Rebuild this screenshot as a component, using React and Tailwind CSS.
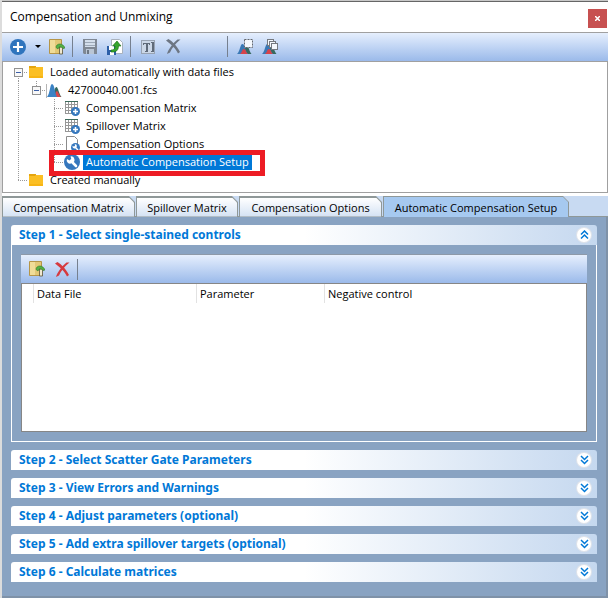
import { useState } from 'react';
import clsx from 'clsx';

const TREE = [
  { id: 'auto', label: 'Loaded automatically with data files', icon: 'folder', guides: ['boxFirst'] },
  { id: 'fcs', label: '42700040.001.fcs', icon: 'peaks', guides: ['line', 'boxLast'] },
  { id: 'matrix', label: 'Compensation Matrix', icon: 'grid', guides: ['line', 'blank', 'tee'] },
  { id: 'spill', label: 'Spillover Matrix', icon: 'grid', guides: ['line', 'blank', 'tee'] },
  { id: 'options', label: 'Compensation Options', icon: 'page', guides: ['line', 'blank', 'tee'] },
  { id: 'setup', label: 'Automatic Compensation Setup', icon: 'wrench', guides: ['line', 'blank', 'end'] },
  { id: 'manual', label: 'Created manually', icon: 'folder', guides: ['end'] },
];

const TABS = [
  { label: 'Compensation Matrix', width: 'w-[133px]' },
  { label: 'Spillover Matrix', width: 'w-[102px]' },
  { label: 'Compensation Options', width: 'w-[143px]' },
  { label: 'Automatic Compensation Setup', width: 'w-[186px]' },
];

const STEPS = [
  'Step 1 - Select single-stained controls',
  'Step 2 - Select Scatter Gate Parameters',
  'Step 3 - View Errors and Warnings',
  'Step 4 - Adjust parameters (optional)',
  'Step 5 - Add extra spillover targets (optional)',
  'Step 6 - Calculate matrices',
];

function Guide({ kind }) {
  const box = kind === 'boxFirst' || kind === 'boxLast';
  return (
    <svg width="18" height="18" viewBox="0 0 18 18" className="shrink-0" shapeRendering="crispEdges">
      <g stroke="#9a9a9a" strokeDasharray="1 1" fill="none">
        {(kind === 'line' || kind === 'tee') && <path d="M9.5 0V18" />}
        {(kind === 'end' || kind === 'boxLast') && <path d="M9.5 0V9" />}
        {kind === 'boxFirst' && <path d="M9.5 9V18" />}
        {kind !== 'line' && kind !== 'blank' && <path d="M9 9.5H18" />}
      </g>
      {box && (
        <>
          <rect x="5.5" y="5.5" width="8" height="8" fill="#f8f8f8" stroke="#919191" />
          <path d="M7 9.5H12" stroke="#3b5fa8" />
        </>
      )}
    </svg>
  );
}

function FolderIcon() {
  return (
    <svg width="16" height="16" viewBox="0 0 16 16">
      <path d="M1 2h7v3H1z" fill="#e5a50f" />
      <path d="M1 4h6l1-1h7v11H1z" fill="#fbbf24" />
      <path d="M1 12h14v2H1z" fill="#f7b515" />
    </svg>
  );
}

function PeaksIcon() {
  return (
    <svg width="16" height="16" viewBox="0 0 16 16">
      <path d="M.5 2v14" stroke="#b4b4b4" />
      <path d="M7 15c1-6 2-10 3.500-10S13 12 15.500 15z" fill="#37695f" />
      <path d="M9 15c0-4 1-6 2-6s2 4 4 6z" fill="#d8484c" />
      <path d="M1 15c3-3 3-13 5-13 2.500 0 3 10 5 13z" fill="#3b82c4" />
    </svg>
  );
}

function GridIcon() {
  return (
    <svg width="16" height="16" viewBox="0 0 16 16">
      <path d="M1 1h13v13H1z" fill="#fff" />
      <path d="M1.500 1v13M4.500 1v13M7.500 1v13M10.500 1v13M13.500 1v13M1 4.500h13M1 7.500h13M1 10.500h13M1 13.500h13" stroke="#979797" shapeRendering="crispEdges" />
      <path d="M1 1h13v1H1z" fill="#3d6b5c" />
      <circle cx="11.500" cy="11.500" r="4.500" fill="#3577bd" />
      <path d="M11.500 9v5M9 11.500h5" stroke="#fff" strokeWidth="1.500" />
    </svg>
  );
}

function WrenchShape() {
  return (
    <>
      <circle cx="8" cy="8" r="8" fill="#3577bd" />
      <path d="M7 7l5 5" stroke="#fff" strokeWidth="2.600" strokeLinecap="round" />
      <path d="M3 5a3.200 3.200 0 0 0 5 3.800A3.200 3.200 0 0 0 6.500 2.500L7.300 5 5.500 6.600z" fill="#fff" />
    </>
  );
}

function PageIcon() {
  return (
    <svg width="16" height="16" viewBox="0 0 16 16">
      <path d="M2.500 .5h8l3 3v12h-11z" fill="#fff" stroke="#8b8b8b" />
      <g transform="translate(7 7) scale(.56)"><WrenchShape /></g>
    </svg>
  );
}

const ICONS = {
  folder: <FolderIcon />,
  peaks: <PeaksIcon />,
  grid: <GridIcon />,
  page: <PageIcon />,
  wrench: <svg width="16" height="16" viewBox="0 0 16 16"><WrenchShape /></svg>,
};

function AddIcon() {
  return (
    <svg width="16" height="16" viewBox="0 0 16 16">
      <circle cx="8" cy="8" r="8" fill="#2f74bd" />
      <path d="M8 3v10M3 8h10" stroke="#fff" strokeWidth="2.200" />
    </svg>
  );
}

function ImportIcon() {
  return (
    <svg width="16" height="16" viewBox="0 0 16 16">
      <path d="M.5 .5h12v14H.5z" fill="#e3c877" stroke="#b59548" />
      <path d="M1 1h5v13H1z" fill="#f0dc98" />
      <path d="M10.500 8h3v7h-3z" fill="#efe8d0" stroke="#5c5333" strokeWidth=".8" />
      <path d="M7 8.500c0-2 1.500-3.500 4-3.500 2 0 4 1.500 5 4l-2 .5-1.500-1.500-2.500 0-1 2z" fill="#55b045" stroke="#2b7b2b" strokeWidth=".6" />
    </svg>
  );
}

function SaveIcon() {
  return (
    <svg width="14" height="15" viewBox="0 0 14 15">
      <path d="M0 0h14v15H1l-1-1z" fill="#7f8894" />
      <path d="M2 1h10v7H2z" fill="#d4dfec" />
      <path d="M2 3.500h10M2 6.500h10" stroke="#9da9b8" />
      <path d="M3 10h8v5H3z" fill="#bac6d5" />
      <path d="M4 11h2v4H4z" fill="#6d7784" />
    </svg>
  );
}

function ExportIcon() {
  return (
    <svg width="16" height="16" viewBox="0 0 16 16">
      <path d="M4.500 .5h8l3 3v11h-11z" fill="#fff" stroke="#a9b2bd" />
      <path d="M0 7h9v9H0z" fill="#2c5fa8" />
      <path d="M2 7h5v4H2zM3 13h4v3H3z" fill="#fff" />
      <path d="M4 11c3.500 0 4-2 4-4H5.500L10 2l4 5h-2.500c0 4-2 6.500-7.500 6z" fill="#37a52d" stroke="#146914" strokeWidth=".6" />
    </svg>
  );
}

function RenameIcon() {
  return (
    <svg width="14" height="14" viewBox="0 0 14 14" shapeRendering="crispEdges">
      <path d="M.5 .5h13v13H.5z" fill="#cbd7e7" stroke="#98a3b3" />
      <path d="M2 3.500h7M2.500 3v2M8.500 3v2M4 11.500h3M10 2.500h3M10 11.500h3" stroke="#5f6a79" />
      <path d="M5.500 3v8M11.500 3v8" stroke="#5f6a79" strokeWidth="2" />
    </svg>
  );
}

function CrossIcon({ color }) {
  return (
    <svg width="15" height="15" viewBox="0 0 15 15" fill={color}>
      <path d="M0 1.500L2.500 0C6 2 11 7 14 13l-2 1.500C10 10 5 5 0 1.500z" />
      <path d="M14.500 .5C9.500 4 6 9 4 13.500L1 15C2.500 10 7 4 11.500 .5z" />
    </svg>
  );
}

function GateIcon({ stacked }) {
  return (
    <svg width="16" height="16" viewBox="0 0 16 16">
      <path d="M5 15c2-3 2-8 4.500-8s2.500 5 5 8z" fill="#37695f" />
      <path d="M0 15c3-2 3-10 5.500-10S8 12 11 15z" fill="#3a78b5" />
      <path d="M3 15c2-1 2-5 4-5s2 4 4 5z" fill="#d8434a" />
      {stacked ? (
        <g fill="#f4f8fd" stroke="#75797f">
          <rect x="5.500" y=".5" width="6" height="6" />
          <rect x="7.500" y="2.500" width="6" height="6" />
          <rect x="9.500" y="4.500" width="6" height="6" />
        </g>
      ) : (
        <rect x="7.500" y=".5" width="8" height="8" fill="#f4f8fd" stroke="#62676e" strokeDasharray="2 1" />
      )}
    </svg>
  );
}

function Chevrons({ up }) {
  return (
    <span className="flex size-[14px] items-center justify-center rounded-full bg-white ring-1 ring-[#dfe3ea]">
      <svg width="9" height="10" viewBox="0 0 9 10" fill="none" stroke="#0078d7" strokeWidth="1.500">
        {up ? <path d="M1 4.500L4.500 1 8 4.500M1 8.500L4.500 5 8 8.500" /> : <path d="M1 1l3.500 3.500L8 1M1 5l3.500 3.500L8 5" />}
      </svg>
    </span>
  );
}

function Separator() {
  return <span className="h-[21px] w-px bg-[#76808f]" />;
}

function ToolButton({ label, children, className }) {
  return (
    <button type="button" aria-label={label} className={clsx('flex size-5 items-center justify-center', className)}>
      {children}
    </button>
  );
}

function ControlsList() {
  return (
    <div className="border-x border-b border-white px-[9px] pt-[9px] pb-[9px]">
      <div className="flex h-[29px] items-center border-t border-[#8d99a8] bg-linear-to-b from-[#e6effd] to-[#9bbaea] pl-[6px]">
        <ToolButton label="Add data file"><ImportIcon /></ToolButton>
        <ToolButton label="Remove data file" className="mr-[5px] ml-[5px]"><CrossIcon color="#d63a3f" /></ToolButton>
        <Separator />
      </div>
      <div className="h-[149px] border border-[#868686] bg-white">
        <table className="w-full table-fixed border-separate border-spacing-0 text-left text-[11px]">
          <colgroup>
            <col className="w-[12px]" />
            <col className="w-[163px]" />
            <col className="w-[128px]" />
            <col />
          </colgroup>
          <thead>
            <tr className="h-[19px]">
              <th className="border-r border-[#e2e2e2] p-0" />
              <th className="border-r border-[#e2e2e2] p-0 pl-[3px] font-normal">Data File</th>
              <th className="border-r border-[#e2e2e2] p-0 pl-[3px] font-normal">Parameter</th>
              <th className="p-0 pl-[3px] font-normal">Negative control</th>
            </tr>
          </thead>
        </table>
      </div>
    </div>
  );
}

export default function App() {
  const [selected, setSelected] = useState('setup');
  const [tab, setTab] = useState(3);
  const [openStep, setOpenStep] = useState(0);

  return (
    <div className="flex min-h-screen flex-col border-l-2 border-[#dcdcdc] bg-white font-['Open_Sans','Noto_Sans',sans-serif] text-[11px] leading-[18px] text-black">
      <div className="h-[2px] border-b border-[#666666] bg-[#c8c8c8]" />
      <header className="flex h-[30px] items-center justify-between pl-[8px]">
        <h1 className="text-[12px]">Compensation and Unmixing</h1>
        <button type="button" aria-label="Close" className="mt-[3px] mr-px flex size-[19px] items-center justify-center bg-[#c75050]">
          <svg width="5" height="5" viewBox="0 0 5 5" stroke="#fff" strokeWidth="1.500"><path d="M0 0l5 5M5 0L0 5" /></svg>
        </button>
      </header>

      {/* Main toolbar */}
      <div className="flex h-[30px] items-center border-y border-[#a0a0a0] bg-linear-to-b from-[#e6effd] to-[#9bbaea] pb-px pl-[6px]">
        <ToolButton label="Add"><AddIcon /></ToolButton>
        <button type="button" aria-label="Add options" className="flex h-5 w-[19px] items-center justify-center">
          <svg width="6" height="3" viewBox="0 0 6 3"><path d="M0 0h6L3 3z" fill="#000" /></svg>
        </button>
        <ToolButton label="Import" className="mr-[5px]"><ImportIcon /></ToolButton>
        <Separator />
        <ToolButton label="Save" className="ml-[7px]"><SaveIcon /></ToolButton>
        <ToolButton label="Export" className="mr-[5px] ml-[5px]"><ExportIcon /></ToolButton>
        <Separator />
        <ToolButton label="Rename" className="ml-[7px]"><RenameIcon /></ToolButton>
        <ToolButton label="Delete" className="mr-[44px] ml-[5px]"><CrossIcon color="#6d7683" /></ToolButton>
        <Separator />
        <ToolButton label="Apply gate" className="ml-[7px]"><GateIcon /></ToolButton>
        <ToolButton label="Apply to all gates" className="ml-[5px]"><GateIcon stacked /></ToolButton>
      </div>

      {/* Matrix tree */}
      <div className="relative border-x border-b border-[#a0a0a0] pt-px pb-[3px] pl-[6px]">
        <ul role="tree">
          {TREE.map(item => (
            <li key={item.id} role="treeitem" aria-selected={selected === item.id} className="flex h-[18px] items-center">
              {item.guides.map((kind, i) => <Guide key={i} kind={kind} />)}
              <span className="ml-px">{ICONS[item.icon]}</span>
              <button
                type="button"
                onClick={() => setSelected(item.id)}
                className={clsx('ml-[3px] h-[16px] px-[3px] leading-[16px]', selected === item.id && 'bg-[#0078d7] text-white')}
              >
                {item.label}
              </button>
            </li>
          ))}
        </ul>
        <div className="pointer-events-none absolute top-[88px] left-[46px] h-[26px] w-[216px] border-[5px] border-[#ed1c24]" />
      </div>

      {/* Tabs */}
      <div role="tablist" className="mt-[3px] flex h-[21px] gap-px border-b border-[#8f9898] bg-[#c8daf2]">
        {TABS.map((t, i) => (
          <button
            key={t.label}
            type="button"
            role="tab"
            aria-selected={tab === i}
            onClick={() => setTab(i)}
            className={clsx('h-[21px] bg-[#8f9898] px-px pt-px [clip-path:polygon(0_0,calc(100%-6px)_0,100%_6px,100%_100%,0_100%)]', t.width)}
          >
            <span
              className={clsx(
                'flex items-center justify-center whitespace-nowrap pt-[2px] [clip-path:polygon(0_0,calc(100%-5px)_0,100%_5px,100%_100%,0_100%)]',
                tab === i ? 'h-[20px] bg-[#a6c9f0]' : 'h-[19px] bg-linear-to-b from-white to-[#d3e1f3]'
              )}
            >
              {t.label}
            </span>
          </button>
        ))}
      </div>

      {/* Steps */}
      <main className="flex grow flex-col gap-[8px] border-r-2 border-b-2 border-[#7f92a8] bg-[#89a3c2] pt-[8px] pr-[9px] pb-[12px] pl-[9px]">
        {STEPS.map((title, i) => (
          <section key={title}>
            <h2>
              <button
                type="button"
                aria-expanded={openStep === i}
                onClick={() => setOpenStep(openStep === i ? -1 : i)}
                className="flex h-[20px] w-full items-center justify-between rounded-t-[3px] bg-linear-to-r from-white from-50% to-[#c5d8ef] pr-[6px] pl-[8px] font-['Noto_Sans',sans-serif] text-[12px] font-bold text-[#0078d7]"
              >
                {title}
                <Chevrons up={openStep === i} />
              </button>
            </h2>
            {openStep === i && <ControlsList />}
          </section>
        ))}
      </main>
    </div>
  );
}
